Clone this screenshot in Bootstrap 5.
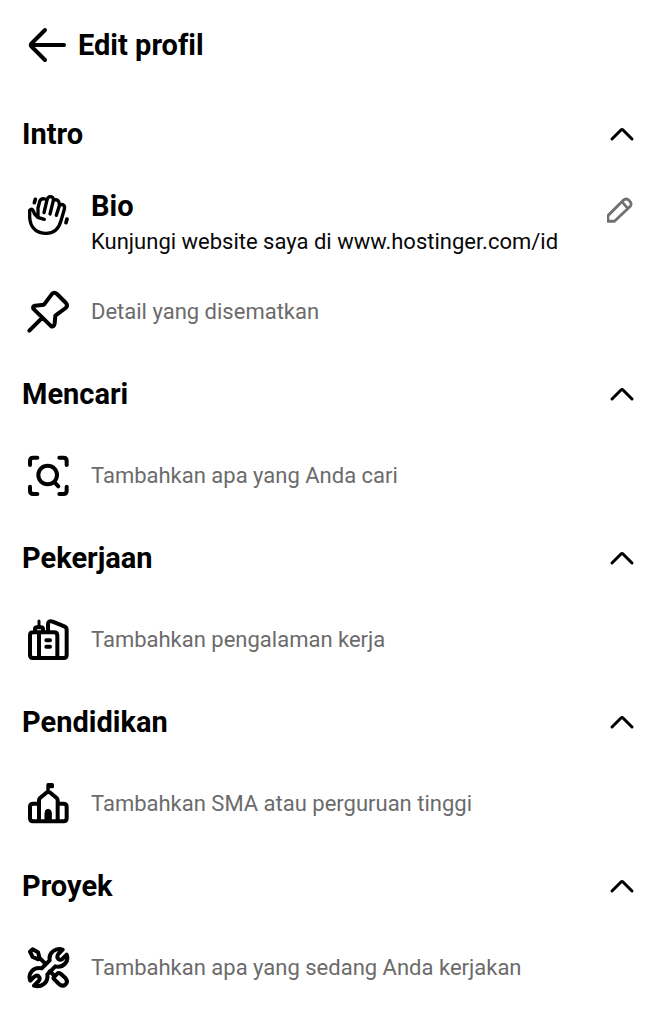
<!DOCTYPE html>
<html lang="id">
<head>
<meta charset="utf-8">
<meta name="viewport" content="width=device-width, initial-scale=1">
<title>Edit profil</title>
<link href="https://cdn.jsdelivr.net/npm/bootstrap@5.3.0/dist/css/bootstrap.min.css" rel="stylesheet">
<style>
body { font-family: Roboto, "Liberation Sans", sans-serif; background: #fff; color: #080808; font-variant-ligatures: none; }
.plain { color: inherit; background: none; border: 0; padding: 0; display: flex; align-items: center; text-align: left; }
.topbar { padding: 27px 24px 30px 28px; gap: 10px; }
h1, h2, h3 { font-size: 29px; line-height: 34px; font-weight: 700; margin: 0; color: #000; }
.section-head { height: 82px; padding: 0 24px 0 22px; }
.entry { height: 82px; padding: 0 24px 0 26px; gap: 21px; font-size: 22px; line-height: 30px; }
.entry-bio { height: 96px; padding-top: 14px; }
.entry-bio > .glyph { margin-top: 4px; }
.edit-btn { margin-top: 8px; }
.hint { color: #6b6b6b; }
svg { display: block; flex: none; fill: none; stroke: #000; stroke-linecap: round; stroke-linejoin: round; }
.glyph { width: 44px; height: 44px; stroke-width: 12; }
.chevron { width: 26px; height: 16px; stroke-width: 3; }
.pencil { width: 28px; height: 28px; stroke: #707070; stroke-width: 3; }
</style>
</head>
<body>
<header class="topbar d-flex align-items-center">
  <button class="plain" type="button" aria-label="Kembali">
    <svg width="40" height="36" viewBox="0 0 40 36" stroke-width="4"><path d="M36 18H3M17 3 3.500 16.500q-1.500 1.500 0 3L17 33"/></svg>
  </button>
  <h1>Edit profil</h1>
</header>
<main>
  <section>
    <div class="section-head d-flex align-items-center justify-content-between">
      <h2>Intro</h2>
      <button class="plain" type="button" aria-label="Ciutkan Intro"><svg class="chevron" viewBox="0 0 26 16"><path d="M3 13 12 4q1-1 2 0l9 9"/></svg></button>
    </div>
    <div class="entry entry-bio d-flex align-items-start">
      <svg class="glyph" viewBox="33 39 132 132"><path stroke-width="10" d="M88 118 68 112Q56 101 54 91Q50 84 44 91V111C45 145 67 160 94 160C119 160 132 145 138 122L148 88Q151 77 143 74M69 110V84L74 64Q78 54 90 57M87 98 96 60Q99 49 107 50Q115 51 116 60Q132 56 133 73M105 102 115 62M124 106 133 77Q137 72 143 74"/><path stroke-width="11" d="M61 58 58 68M156 117 153 128"/></svg>
      <div class="flex-grow-1 d-grid gap-1">
        <h3>Bio</h3>
        <div>Kunjungi website saya di www.hostinger.com/id</div>
      </div>
      <button class="plain edit-btn" type="button" aria-label="Edit Bio">
        <svg class="pencil" viewBox="2 1 30 30"><path d="M3 27v-6L20 4q3-2 6 1t1 6L10 27ZM18 6l6 7"/></svg>
      </button>
    </div>
    <button class="plain entry w-100" type="button">
      <svg class="glyph" viewBox="33 30 132 132"><path d="M43 152 80 115M57 88Q50 80 60 77L87 74 110 43Q117 34 126 42L153 69Q160 77 152 84L121 107 119 130Q117 142 109 139Z"/></svg>
      <span class="hint">Detail yang disematkan</span>
    </button>
  </section>
  <section>
    <div class="section-head d-flex align-items-center justify-content-between">
      <h2>Mencari</h2>
      <button class="plain" type="button" aria-label="Ciutkan Mencari"><svg class="chevron" viewBox="0 0 26 16"><path d="M3 13 12 4q1-1 2 0l9 9"/></svg></button>
    </div>
    <button class="plain entry w-100" type="button">
      <svg class="glyph" viewBox="33 40 132 132"><path d="M45 73V61Q45 51 55 51H67M133 51H145Q155 51 155 61V73M45 138V150Q45 160 55 160H67M133 160H145Q155 160 155 150V138M118 124 130 137"/><circle cx="98" cy="103" r="28"/></svg>
      <span class="hint">Tambahkan apa yang Anda cari</span>
    </button>
  </section>
  <section>
    <div class="section-head d-flex align-items-center justify-content-between">
      <h2>Pekerjaan</h2>
      <button class="plain" type="button" aria-label="Ciutkan Pekerjaan"><svg class="chevron" viewBox="0 0 26 16"><path d="M3 13 12 4q1-1 2 0l9 9"/></svg></button>
    </div>
    <button class="plain entry w-100" type="button">
      <svg class="glyph" viewBox="33 36 132 132"><path d="M45 88Q45 79 54 79H117Q127 79 127 89V156H54Q45 156 45 147ZM72 79V156M127 156H146Q155 156 155 147V71Q155 64 148 61L113 47Q99 42 99 54V77M60 77V70Q60 64 66 64H78Q84 64 84 70V77M94 103H105M94 122H105"/><path stroke-width="9" d="M72 61V45"/></svg>
      <span class="hint">Tambahkan pengalaman kerja</span>
    </button>
  </section>
  <section>
    <div class="section-head d-flex align-items-center justify-content-between">
      <h2>Pendidikan</h2>
      <button class="plain" type="button" aria-label="Ciutkan Pendidikan"><svg class="chevron" viewBox="0 0 26 16"><path d="M3 13 12 4q1-1 2 0l9 9"/></svg></button>
    </div>
    <button class="plain entry w-100" type="button">
      <svg class="glyph" viewBox="33 39 132 132"><path d="M72 157V94Q72 90 76 86L94 71Q100 67 106 71L124 86Q128 90 128 94V157M72 104H55Q45 104 45 113V148Q45 157 54 157H146Q155 157 155 148V113Q155 104 145 104H128"/><path stroke-width="10" d="M99 68V47H112V53H99"/><path d="M90 157V132Q90 121 99.500 121T109 132V157Z" fill="#000" stroke-width="3"/></svg>
      <span class="hint">Tambahkan SMA atau perguruan tinggi</span>
    </button>
  </section>
  <section>
    <div class="section-head d-flex align-items-center justify-content-between">
      <h2>Proyek</h2>
      <button class="plain" type="button" aria-label="Ciutkan Proyek"><svg class="chevron" viewBox="0 0 26 16"><path d="M3 13 12 4q1-1 2 0l9 9"/></svg></button>
    </div>
    <button class="plain entry w-100" type="button">
      <svg class="glyph" viewBox="33 37 132 132"><path d="M90 94 104 80C100 57 122 41 143 48L130 61Q124 70 130 76Q136 81 143 75L155 63C163 84 145 103 121 98L97 122C101 148 77 163 57 156L71 142Q77 134 71 128Q65 123 58 129L46 141C37 119 56 99 80 104Z"/><path d="M78 77 91 90M45 54 53 47 69 56 74 73 70 77 53 70ZM104 113 113 121M116 131 128 119Q133 116 138 121L152 134Q160 146 151 153Q142 160 132 151L118 137Q114 134 116 131Z"/></svg>
      <span class="hint">Tambahkan apa yang sedang Anda kerjakan</span>
    </button>
  </section>
</main>
<script src="https://cdn.jsdelivr.net/npm/bootstrap@5.3.0/dist/js/bootstrap.bundle.min.js"></script>
</body>
</html>
